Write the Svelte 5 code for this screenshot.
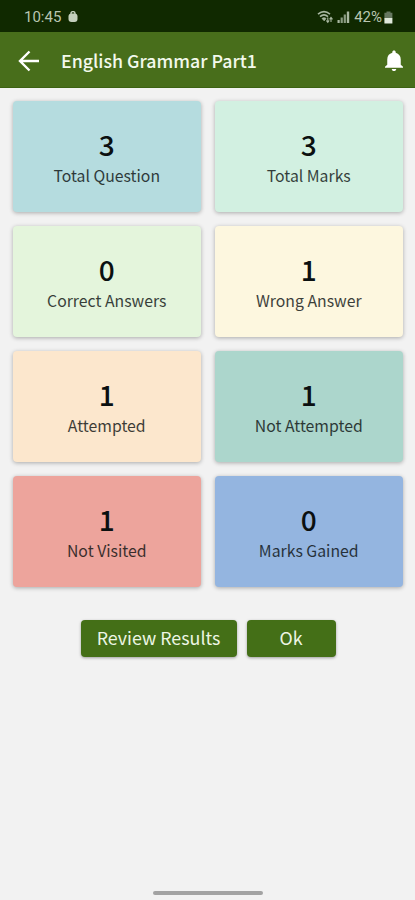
<script>
    const title = 'English Grammar Part1'

    const results = [
        { key: 'total', value: 3, label: 'Total Question' },
        { key: 'marks', value: 3, label: 'Total Marks' },
        { key: 'correct', value: 0, label: 'Correct Answers' },
        { key: 'wrong', value: 1, label: 'Wrong Answer' },
        { key: 'attempted', value: 1, label: 'Attempted' },
        { key: 'skipped', value: 1, label: 'Not Attempted' },
        { key: 'unseen', value: 1, label: 'Not Visited' },
        { key: 'gained', value: 0, label: 'Marks Gained' }
    ]
</script>

<div class="screen">
    <div class="status">
        <span class="time">10:45</span>
        <svg class="bag" width="10" height="12" viewBox="0 0 10 12">
            <path d="M3 4V2.4a2 1.8 0 0 1 4 0V4" fill="none" stroke="#c3cfbc" stroke-width="1.4" />
            <rect x="0.5" y="2.5" width="9" height="8.5" rx="3" fill="#c3cfbc" />
        </svg>
        <svg class="wifi" width="17" height="14" viewBox="0 0 17 14" fill="none" stroke="#a9b8a1" stroke-width="1.6">
            <path d="M1 4.2Q7 -1 13 4.2" />
            <path d="M3 6.6Q7 3 11 6.6" />
            <path d="M5 8.4Q7 7 9 8.4L7.2 10.8Z" fill="#a9b8a1" stroke-width="0.8" />
            <path d="M10.8 7.5v4.5M9.3 10.5l1.5 1.8 1.4-1.8M14 12V7.7M12.6 9.3l1.4-1.8L15.5 9.3" stroke-width="1.1" />
        </svg>
        <svg class="signal" width="13" height="12" viewBox="0 0 13 12" fill="#a9b8a1">
            <rect x="0.5" y="9" width="2.2" height="3" />
            <rect x="3.6" y="6.5" width="2.2" height="5.5" opacity="0.8" />
            <rect x="6.7" y="3.5" width="2.2" height="8.5" opacity="0.8" />
            <rect x="9.8" y="0.5" width="2.4" height="11.5" />
        </svg>
        <span class="percent">42%</span>
        <svg class="battery" width="9" height="13" viewBox="0 0 9 13">
            <path d="M2.5 0.5h4v1.3h1.9v5.4H0.4V1.8h2.1z" fill="#667760" />
            <path d="M0.4 7h8v5.5h-8z" fill="#dfe8da" />
        </svg>
    </div>

    <header>
        <button class="icon back" aria-label="Back">
            <svg width="22" height="22" viewBox="0 0 22 22" fill="none" stroke="#fff" stroke-width="2.4">
                <path d="M21 11H2.5M11.5 1.5L2 11l9.5 9.5" />
            </svg>
        </button>
        <h1>{title}</h1>
        <button class="icon bell" aria-label="Notifications">
            <svg width="18" height="21" viewBox="4 2 16 20" preserveAspectRatio="none" fill="#fff">
                <path d="M12 22c1.1 0 2-.9 2-2h-4c0 1.1.89 2 2 2zm6-6v-5c0-3.07-1.64-5.64-4.5-6.32V4c0-.83-.67-1.5-1.5-1.5s-1.5.67-1.5 1.5v.68C7.63 5.36 6 7.92 6 11v5l-2 2v1h16v-1l-2-2z" />
            </svg>
        </button>
    </header>

    <main>
        {#each results as item}
            <div class="card {item.key}">
                <div class="value">{item.value}</div>
                <div class="label">{item.label}</div>
            </div>
        {/each}
    </main>

    <div class="actions">
        <button class="review">Review Results</button>
        <button class="ok">Ok</button>
    </div>

    <div class="handle"></div>
</div>

<style>
    :global(body) {
        margin: 0;
        background: #f2f2f2;
    }

    .screen {
        display: flex;
        flex-direction: column;
        box-sizing: border-box;
        width: 415px;
        height: 900px;
        overflow: hidden;
        background: #f2f2f2;
        font-family: "Noto Sans CJK SC", "Noto Sans", sans-serif;
    }

    .status {
        display: flex;
        align-items: center;
        box-sizing: border-box;
        height: 32px;
        padding: 2px 22px 0 24px;
        background: #102900;
        color: #b9c6b1;
        font-family: Roboto, sans-serif;
        font-size: 15px;
    }

    .bag {
        margin-left: 7px;
    }

    .wifi {
        margin-left: auto;
    }

    .signal {
        margin-left: 3px;
    }

    .percent {
        margin-left: 4px;
    }

    .battery {
        margin-left: 2px;
    }

    header {
        display: flex;
        align-items: center;
        box-sizing: border-box;
        height: 56px;
        padding: 2px 12px 0 18px;
        background: #486e1b;
        border-bottom: 1px solid #3c6212;
    }

    h1 {
        flex: 1;
        margin: 0 0 2px 21px;
        color: #f3f9ec;
        font-size: 17.8px;
        line-height: 28px;
        font-weight: 500;
        white-space: nowrap;
    }

    button {
        border: none;
        font-family: inherit;
        cursor: pointer;
    }

    .icon {
        display: flex;
        padding: 0;
        background: none;
    }

    main {
        display: grid;
        grid-template-columns: 188.5px 188.5px;
        grid-auto-rows: 111px;
        gap: 14px 13.5px;
        padding: 13px 12px 0 12.5px;
    }

    .card {
        display: flex;
        flex-direction: column;
        align-items: center;
        box-sizing: border-box;
        padding-top: 26px;
        border-radius: 4px;
        box-shadow: 0 1px 4px rgba(0, 0, 0, 0.3);
    }

    .value {
        color: #0b1010;
        font-size: 28px;
        line-height: 34px;
        font-weight: 500;
    }

    .label {
        margin-top: 2px;
        color: #0b1010;
        opacity: 0.8;
        font-size: 15.8px;
        line-height: 26px;
    }

    .total { background: #b5dcdf; }
    .marks { background: #d2f0e1; }
    .correct { background: #e4f5dc; }
    .wrong { background: #fdf7df; }
    .attempted { background: #fce7cd; }
    .skipped { background: #acd6cc; }
    .unseen { background: #eda49c; }
    .gained { background: #94b5e0; }

    .actions {
        display: flex;
        justify-content: center;
        gap: 10px;
        margin-top: 33px;
        padding-left: 1px;
    }

    .actions button {
        height: 37px;
        padding: 0 0 2px;
        border-radius: 4px;
        background: #446f17;
        color: #edf6e4;
        font-size: 17.85px;
        line-height: 35px;
        box-shadow: 0 1px 3px rgba(0, 0, 0, 0.35);
    }

    .review {
        width: 156px;
    }

    .ok {
        width: 89px;
    }

    .handle {
        width: 110px;
        height: 4px;
        margin: auto auto 5px 153px;
        border-radius: 2px;
        background: #a3a3a3;
    }
</style>
